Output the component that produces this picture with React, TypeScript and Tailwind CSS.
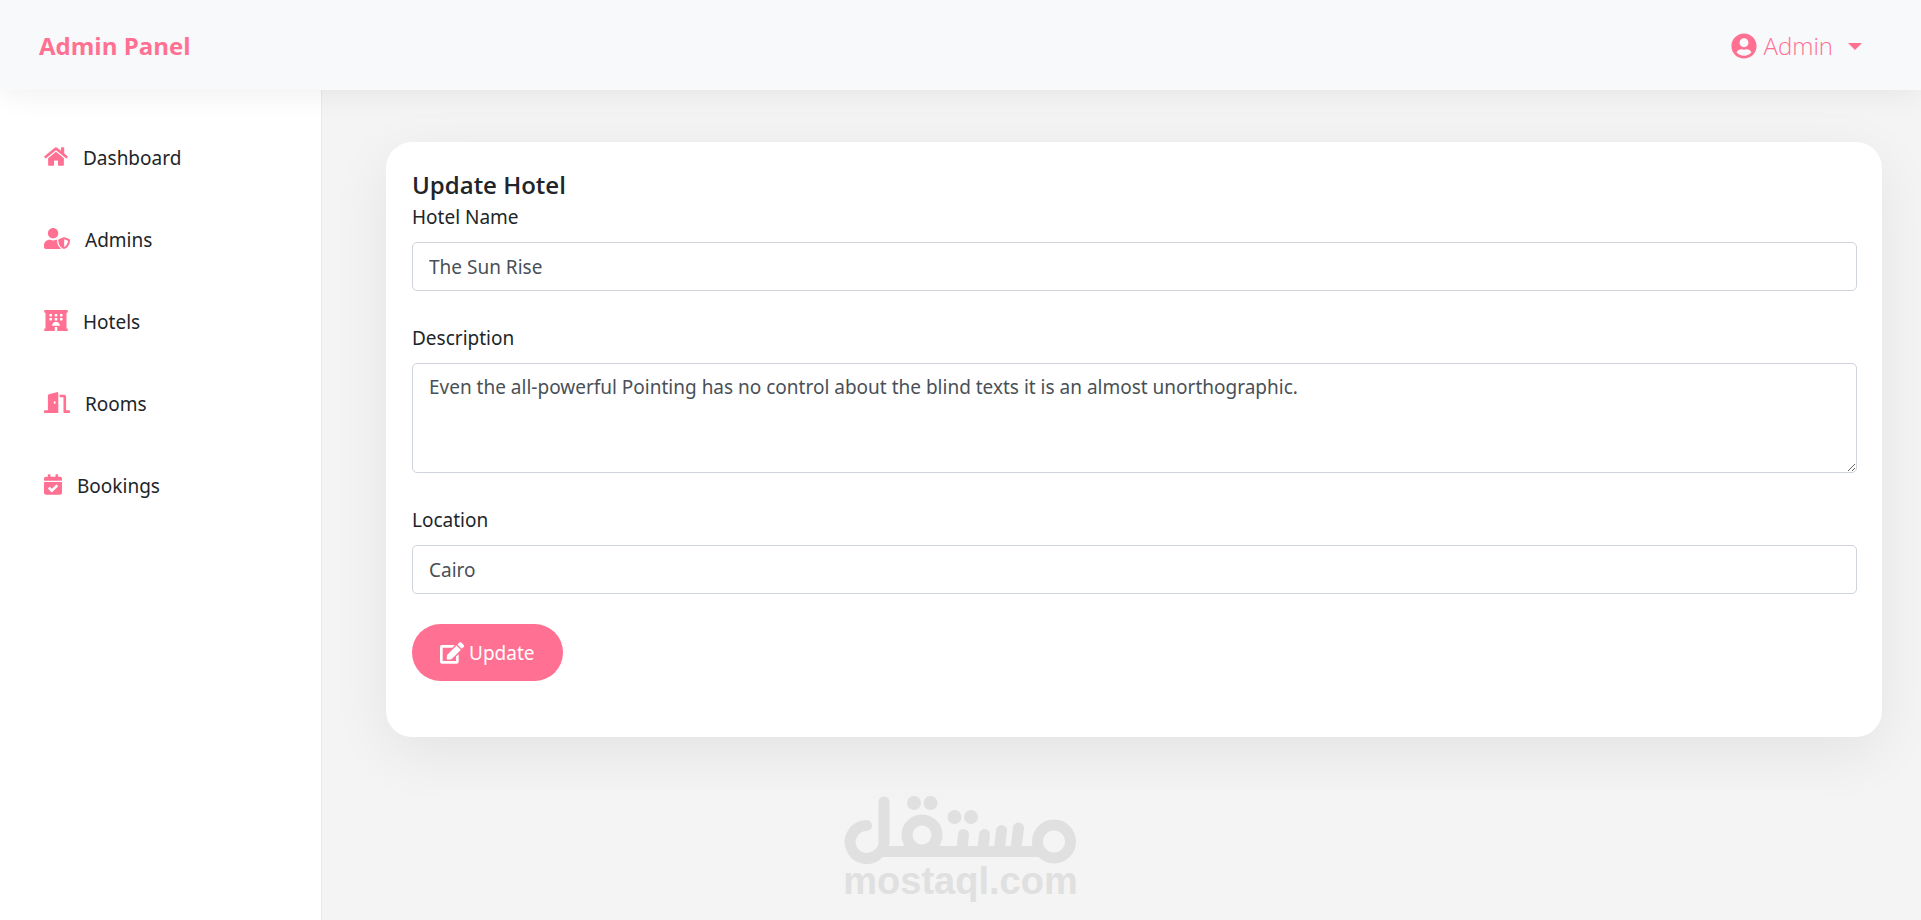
import React, { useState } from 'react';
import { FaHome, FaUserShield, FaHotel, FaDoorOpen, FaCalendarCheck, FaUserCircle, FaEdit } from 'react-icons/fa';

const links = [
    { label: 'Dashboard', icon: <FaHome className="h-[21px] w-6" /> },
    { label: 'Admins', icon: <FaUserShield className="h-[21px] w-[26px]" /> },
    { label: 'Hotels', icon: <FaHotel className="h-[21px] w-6" /> },
    { label: 'Rooms', icon: <FaDoorOpen className="h-[21px] w-[26px]" /> },
    { label: 'Bookings', icon: <FaCalendarCheck className="h-[21px] w-[18px]" /> },
];

const fieldClass = "block w-full rounded-[5px] border border-[#ced4da] bg-white px-4 text-[19px] leading-[30px] text-[#495057] outline-none";

function Header() {
    return (
        <header className="relative z-10 flex h-[90px] items-center justify-between bg-[#f8f9fb] pl-[39px] pr-[59px] pt-[2px] text-[#ff7092] shadow-[0_0_34px_rgba(0,0,0,0.08)]">
            <a href="#" className="font-['Open_Sans',sans-serif] text-[24px] font-bold leading-[38px]">Admin Panel</a>
            <button type="button" className="flex items-center font-['Open_Sans',sans-serif] text-[24px] font-light leading-[38px]">
                <FaUserCircle className="mr-[7px] h-[26px] w-[26px]" />
                Admin
                <span className="ml-[15px] border-x-[7px] border-t-[7px] border-x-transparent border-t-[#ff7092]" />
            </button>
        </header>
    );
}

function Sidebar() {
    return (
        <nav className="w-[322px] shrink-0 border-r border-[#e9e9e9] bg-white pt-[27px]">
            <ul>
                {links.map((link) => (
                    <li key={link.label}>
                        <a href="#" className="flex h-[82px] items-center gap-[15px] pl-11 text-[#212529]">
                            <span className="pb-1 text-[#ff7092]">{link.icon}</span>
                            {link.label}
                        </a>
                    </li>
                ))}
            </ul>
        </nav>
    );
}

function Watermark() {
    return (
        <svg viewBox="1 0 280 150" className="h-[150px] w-[280px]" fill="none" stroke="#e0e0e0" role="img" aria-label="mostaql.com">
            <g strokeWidth="11" strokeLinecap="round">
                <path d="M46.500 55.500A16.500 16.500 0 1 0 58 84C62.500 81 64 77 64 72V32" />
                <path d="M58 81.500H222" strokeLinecap="butt" />
                <circle cx="102" cy="65" r="15" />
                <circle cx="234" cy="71.500" r="16.500" />
                <path d="M143.500 64.500L142 78M164.500 64.500L163 78M181.500 60.500L179.500 78M198.500 58L196 78" />
            </g>
            <g fill="#e0e0e0" stroke="none">
                <circle cx="94" cy="33" r="7" />
                <circle cx="110.500" cy="33" r="7" />
                <circle cx="134.500" cy="47" r="7" />
                <circle cx="151" cy="47" r="7" />
                <text x="140.500" y="124" textAnchor="middle" fontSize="38" fontWeight="700" fontFamily="'Liberation Sans', Arial, sans-serif">mostaql.com</text>
            </g>
        </svg>
    );
}

export default function App() {
    const [name, setName] = useState('The Sun Rise');
    const [description, setDescription] = useState('Even the all-powerful Pointing has no control about the blind texts it is an almost unorthographic.');
    const [location, setLocation] = useState('Cairo');

    return (
        <div className="relative flex min-h-screen flex-col bg-[#f4f4f4] font-['Noto_Sans',sans-serif] text-[19px] leading-[30px] text-[#212529]">
            <Header />
            <div className="flex flex-1">
                <Sidebar />
                <main className="min-w-0 flex-1 pl-16 pr-[39px] pt-[52px]">
                    <form onSubmit={(e) => e.preventDefault()} className="rounded-[26px] bg-white pb-14 pl-[26px] pr-[25px] pt-[26px] shadow-[0_16px_60px_rgba(0,0,0,0.07)]">
                        <h1 className="font-['Open_Sans',sans-serif] text-[24px] font-semibold leading-[34px]">Update Hotel</h1>
                        <label htmlFor="name" className="mb-[10px] block">Hotel Name</label>
                        <input id="name" type="text" value={name} onChange={(e) => setName(e.target.value)} className={`${fieldClass} h-[49px]`} />
                        <label htmlFor="description" className="mb-[10px] mt-8 block">Description</label>
                        <textarea id="description" rows={3} value={description} onChange={(e) => setDescription(e.target.value)} className={`${fieldClass} h-[110px] resize py-2`} />
                        <label htmlFor="location" className="mb-[10px] mt-8 block">Location</label>
                        <input id="location" type="text" value={location} onChange={(e) => setLocation(e.target.value)} className={`${fieldClass} h-[49px]`} />
                        <button type="submit" className="mt-[30px] flex h-[57px] items-center gap-[5px] rounded-full bg-[#ff7092] px-7 text-white">
                            <FaEdit className="h-[22px] w-6" />
                            Update
                        </button>
                    </form>
                </main>
            </div>
            <div className="pointer-events-none absolute inset-x-0 bottom-0 flex justify-center">
                <Watermark />
            </div>
        </div>
    );
}
